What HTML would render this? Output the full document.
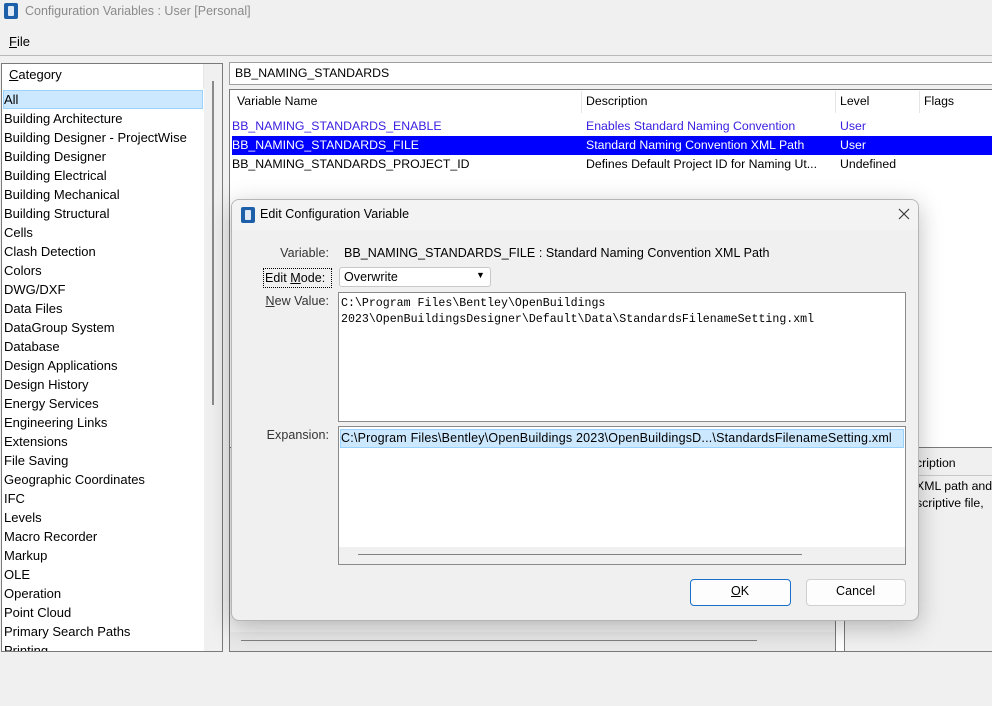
<!DOCTYPE html>
<html><head><meta charset="utf-8"><style>
*{box-sizing:border-box;margin:0;padding:0}
body{width:992px;height:706px;background:#f0f0f0;font-family:"Liberation Sans",sans-serif;font-size:13px;color:#000;position:relative;overflow:hidden}
.abs{position:absolute}
.t{white-space:nowrap}
.cat{position:absolute;left:4px;font-size:13px}
.ico{position:absolute;width:14px;height:16px;background:#1d5fa8;border-radius:2px}
.ico:after{content:"";position:absolute;left:4px;top:3px;width:6px;height:10px;background:#dfe9f5;border-radius:1px}
.dlg{font-size:12.5px;letter-spacing:0.05px}
.lbl{position:absolute;right:589px;text-align:right;white-space:nowrap;color:#333}
.mono{font-family:"Liberation Mono",monospace;font-size:11.6px;letter-spacing:0;line-height:16px}
.row{font-size:12.3px}
</style></head><body>
<div class="ico" style="left:4px;top:3px"></div>
<div class="abs t" style="left:25px;top:4px;color:#8a8a8a;font-size:12.5px">Configuration Variables : User [Personal]</div>
<div class="abs t" style="left:9px;top:34px;font-size:13px"><u>F</u>ile</div>
<div class="abs" style="left:0;top:55px;width:992px;height:1px;background:#b9b9b9"></div>

<div class="abs" style="left:1px;top:63px;width:222px;height:589px;border:1px solid #7a7a7a;background:#fff"></div>
<div class="abs" style="left:2px;top:64px;width:202px;height:24px;background:#fff;border-right:1px solid #e5e5e5"></div>
<div class="abs t" style="left:9px;top:67px;font-size:13px"><u>C</u>ategory</div>
<div class="abs" style="left:204px;top:64px;width:18px;height:587px;background:#f0f0f0"></div>
<div class="abs" style="left:212px;top:81px;width:2px;height:324px;background:#8a8a8a"></div>
<div class="abs" style="left:3px;top:90px;width:200px;height:19px;background:#cce8ff;border:1px solid #99d1ff"></div>
<div class="cat" style="top:92px">All</div>
<div class="cat" style="top:111px">Building Architecture</div>
<div class="cat" style="top:130px">Building Designer - ProjectWise</div>
<div class="cat" style="top:149px">Building Designer</div>
<div class="cat" style="top:168px">Building Electrical</div>
<div class="cat" style="top:187px">Building Mechanical</div>
<div class="cat" style="top:206px">Building Structural</div>
<div class="cat" style="top:225px">Cells</div>
<div class="cat" style="top:244px">Clash Detection</div>
<div class="cat" style="top:263px">Colors</div>
<div class="cat" style="top:282px">DWG/DXF</div>
<div class="cat" style="top:301px">Data Files</div>
<div class="cat" style="top:320px">DataGroup System</div>
<div class="cat" style="top:339px">Database</div>
<div class="cat" style="top:358px">Design Applications</div>
<div class="cat" style="top:377px">Design History</div>
<div class="cat" style="top:396px">Energy Services</div>
<div class="cat" style="top:415px">Engineering Links</div>
<div class="cat" style="top:434px">Extensions</div>
<div class="cat" style="top:453px">File Saving</div>
<div class="cat" style="top:472px">Geographic Coordinates</div>
<div class="cat" style="top:491px">IFC</div>
<div class="cat" style="top:510px">Levels</div>
<div class="cat" style="top:529px">Macro Recorder</div>
<div class="cat" style="top:548px">Markup</div>
<div class="cat" style="top:567px">OLE</div>
<div class="cat" style="top:586px">Operation</div>
<div class="cat" style="top:605px">Point Cloud</div>
<div class="cat" style="top:624px">Primary Search Paths</div>
<div class="abs" style="left:2px;top:643px;width:202px;height:8px;overflow:hidden"><div class="cat" style="top:0px;left:2px">Printing</div></div>

<div class="abs" style="left:229px;top:62px;width:770px;height:23px;border:1px solid #a0a0a0;background:#fff"></div>
<div class="abs t row" style="left:235px;top:66px">BB_NAMING_STANDARDS</div>

<div class="abs" style="left:229px;top:89px;width:770px;height:563px;border:1px solid #7a7a7a;background:#fff"></div>
<div class="abs" style="left:581px;top:91px;width:1px;height:22px;background:#e5e5e5"></div>
<div class="abs" style="left:835px;top:91px;width:1px;height:22px;background:#e5e5e5"></div>
<div class="abs" style="left:919px;top:91px;width:1px;height:22px;background:#e5e5e5"></div>
<div class="abs t row" style="left:237px;top:94px">Variable Name</div>
<div class="abs t row" style="left:586px;top:94px">Description</div>
<div class="abs t row" style="left:840px;top:94px">Level</div>
<div class="abs t row" style="left:924px;top:94px">Flags</div>
<div class="abs" style="left:232px;top:136px;width:760px;height:19px;background:#0000ff"></div>
<div class="abs t row" style="left:232px;top:119px;color:#3a20e0">BB_NAMING_STANDARDS_ENABLE</div>
<div class="abs t row" style="left:586px;top:119px;color:#3a20e0">Enables Standard Naming Convention</div>
<div class="abs t row" style="left:840px;top:119px;color:#3a20e0">User</div>
<div class="abs t row" style="left:232px;top:138px;color:#fff">BB_NAMING_STANDARDS_FILE</div>
<div class="abs t row" style="left:586px;top:138px;color:#fff">Standard Naming Convention XML Path</div>
<div class="abs t row" style="left:840px;top:138px;color:#fff">User</div>
<div class="abs t row" style="left:232px;top:157px">BB_NAMING_STANDARDS_PROJECT_ID</div>
<div class="abs t row" style="left:586px;top:157px">Defines Default Project ID for Naming Ut...</div>
<div class="abs t row" style="left:840px;top:157px">Undefined</div>

<div class="abs" style="left:229px;top:447px;width:607px;height:205px;border:1px solid #7a7a7a;background:#f0f0f0"></div>
<div class="abs" style="left:230px;top:632px;width:605px;height:19px;background:#e8e8e8"></div>
<div class="abs" style="left:241px;top:640px;width:516px;height:1px;background:#808080"></div>
<div class="abs" style="left:844px;top:447px;width:150px;height:205px;border:1px solid #7a7a7a;background:#f0f0f0"></div>
<div class="abs" style="left:845px;top:448px;width:148px;height:28px;border-bottom:1px solid #c8c8c8"></div>
<div class="abs t row" style="left:916px;top:456px">cription</div>
<div class="abs t row" style="left:916px;top:479px">XML path and</div>
<div class="abs t row" style="left:916px;top:496px">scriptive file,</div>

<div class="abs dlg" style="left:231px;top:199px;width:688px;height:422px;background:#f0f0f0;border:1px solid #b5b5b5;border-radius:8px;box-shadow:0 6px 24px rgba(0,0,0,0.25);overflow:hidden">
  <div class="abs" style="left:0;top:0;width:688px;height:30px;background:#f3f3f3"></div>
  <div class="ico" style="left:9px;top:7px"></div>
  <div class="abs t" style="left:28px;top:7px">Edit Configuration Variable</div>
  <svg class="abs" style="left:666px;top:8px" width="12" height="12" viewBox="0 0 12 12"><path d="M1 1L11 11M11 1L1 11" stroke="#333" stroke-width="1.1"/></svg>
  <div class="lbl" style="top:46px">Variable:</div>
  <div class="abs t" style="left:112px;top:46px">BB_NAMING_STANDARDS_FILE : Standard Naming Convention XML Path</div>
  <div class="abs t" style="left:31px;top:68px;width:69px;height:20px;padding:2px 0 0 1px;border:1px dotted #000">Edit <u>M</u>ode:</div>
  <div class="abs" style="left:107px;top:67px;width:152px;height:20px;border:1px solid #c8c8c8;border-radius:3px;background:#fff"></div>
  <div class="abs t" style="left:112px;top:70px">Overwrite</div>
  <div class="abs t" style="left:244px;top:70px;font-size:9px">▼</div>
  <div class="lbl" style="top:94px"><u>N</u>ew Value:</div>
  <div class="abs" style="left:106px;top:92px;width:568px;height:130px;border:1px solid #8a8a8a;background:#fff"></div>
  <div class="abs t mono" style="left:109px;top:96px">C:\Program Files\Bentley\OpenBuildings<br>2023\OpenBuildingsDesigner\Default\Data\StandardsFilenameSetting.xml</div>
  <div class="lbl" style="top:228px">Expansion:</div>
  <div class="abs" style="left:106px;top:226px;width:568px;height:139px;border:1px solid #8a8a8a;background:#fff"></div>
  <div class="abs" style="left:108px;top:229px;width:564px;height:19px;background:#cce8ff;border:1px solid #99d1ff"></div>
  <div class="abs t" style="left:109px;top:231px;letter-spacing:0.2px">C:\Program Files\Bentley\OpenBuildings 2023\OpenBuildingsD...\StandardsFilenameSetting.xml</div>
  <div class="abs" style="left:107px;top:347px;width:566px;height:17px;background:#f0f0f0"></div>
  <div class="abs" style="left:126px;top:354px;width:444px;height:1px;background:#808080"></div>
  <div class="abs" style="left:458px;top:379px;width:101px;height:27px;border:1px solid #1a6fc9;border-radius:4px;background:#fdfdfd"></div>
  <div class="abs t" style="left:499px;top:384px"><u>O</u>K</div>
  <div class="abs" style="left:574px;top:379px;width:100px;height:27px;border:1px solid #cfcfcf;border-radius:4px;background:#fdfdfd"></div>
  <div class="abs t" style="left:604px;top:384px">Cancel</div>
</div>
</body></html>
